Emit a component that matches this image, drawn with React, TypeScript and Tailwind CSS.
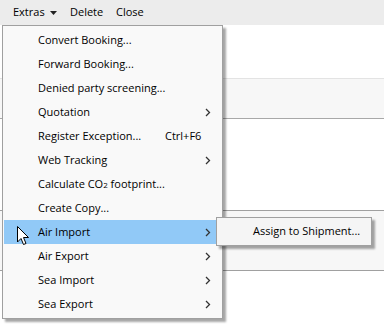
import React from 'react';

const items: { label: React.ReactNode; shortcut?: string; sub?: boolean; active?: boolean }[] = [
  { label: 'Convert Booking...' },
  { label: 'Forward Booking...' },
  { label: 'Denied party screening...' },
  { label: 'Quotation', sub: true },
  { label: 'Register Exception...', shortcut: 'Ctrl+F6' },
  { label: 'Web Tracking', sub: true },
  {
    label: (
      <>
        Calculate CO<span className="text-[8px]">2</span> footprint...
      </>
    ),
  },
  { label: 'Create Copy...' },
  { label: 'Air Import', sub: true, active: true },
  { label: 'Air Export', sub: true },
  { label: 'Sea Import', sub: true },
  { label: 'Sea Export', sub: true },
];

const Chevron = () => (
  <svg width="6" height="9" viewBox="0 0 6 9" className="block">
    <path d="M1 1 L4.5 4.5 L1 8" fill="none" stroke="#333" strokeWidth="1.3" />
  </svg>
);

const Cursor = () => (
  <svg width="13" height="20" viewBox="0 0 13 20" className="absolute left-[17px] top-[226px]">
    <path
      d="M0.5 0.5 L0.5 16 L4 12.5 L6.5 18.5 L9 17.5 L6.5 11.5 L11.5 11.5 Z"
      fill="#fff"
      stroke="#000"
      strokeWidth="1"
      strokeLinejoin="round"
    />
  </svg>
);

export default function App() {
  return (
    <div className="relative w-[384px] h-[324px] overflow-hidden bg-white text-[11px] text-black font-['Open_Sans',sans-serif]">
      {/* toolbar */}
      <div className="h-[25px] bg-[#ececec] flex items-center pl-[13px]">
        <div className="w-[57px] flex items-center gap-[5px]">
          <span>Extras</span>
          <svg width="7" height="4" viewBox="0 0 7 4">
            <path d="M0 0 H7 L3.5 4 Z" fill="#222" />
          </svg>
        </div>
        <span className="w-[46px]">Delete</span>
        <span>Close</span>
      </div>
      {/* background panels */}
      <div className="h-[53px] bg-white" />
      <div className="h-[41px] bg-[#f7f7f7] border-t border-[#e3e3e3] border-b border-b-[#a8a8a8]" />
      <div className="h-[91px] bg-white" />
      <div className="h-[61px] bg-[#f7f7f7] border-t border-b border-[#a0a0a0]" />

      {/* main menu */}
      <div className="absolute left-[2px] top-[25px] w-[221px] bg-[#f9f9f9] border border-[#a0a0a0] py-[2px] shadow-[3px_3px_2px_rgba(0,0,0,0.35)]">
        {items.map((it, i) => (
          <div
            key={i}
            className={`h-[24px] mx-[1px] grid grid-cols-[127px_1fr_auto] items-center pl-[34px] pr-[10px] ${it.active ? 'bg-[#91c9f7]' : ''}`}
          >
            <span className="whitespace-nowrap">{it.label}</span>
            <span>{it.shortcut}</span>
            {it.sub ? <Chevron /> : <span />}
          </div>
        ))}
      </div>

      {/* submenu */}
      <div className="absolute left-[216px] top-[217px] w-[156px] h-[29px] bg-[#f5f5f5] border border-[#a0a0a0] flex items-center pl-[36px] shadow-[3px_3px_2px_rgba(0,0,0,0.35)]">
        Assign to Shipment...
      </div>

      <Cursor />
    </div>
  );
}
